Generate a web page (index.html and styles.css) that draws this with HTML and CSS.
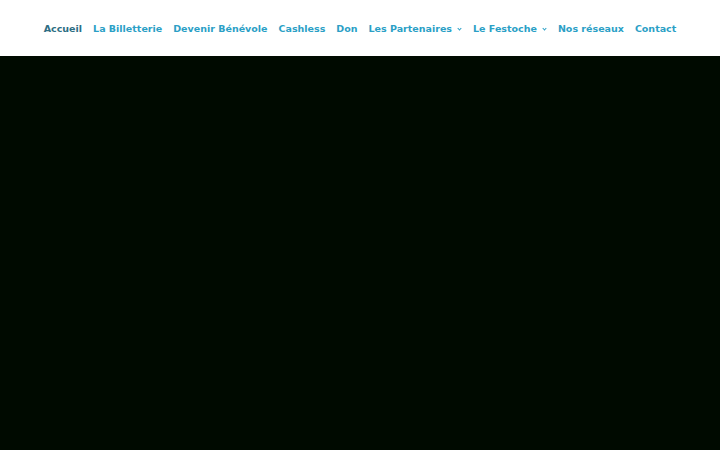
FILE: index.html
```html
<!DOCTYPE html>
<html lang="fr">
<head>
  <meta charset="UTF-8" />
  <meta name="viewport" content="width=device-width, initial-scale=1.0" />
  <title>Festoche</title>
  <link rel="stylesheet" href="styles.css">
</head>
<body>
  <header class="site-header">
    <nav class="main-nav">
      <a class="nav-link current" href="#">Accueil</a>
      <a class="nav-link" href="#">La Billetterie</a>
      <a class="nav-link" href="#">Devenir Bénévole</a>
      <a class="nav-link" href="#">Cashless</a>
      <a class="nav-link" href="#">Don</a>
      <a class="nav-link has-sub" href="#">Les Partenaires</a>
      <a class="nav-link has-sub" href="#">Le Festoche</a>
      <a class="nav-link" href="#">Nos réseaux</a>
      <a class="nav-link" href="#">Contact</a>
    </nav>
  </header>
  <section class="hero"></section>
</body>
</html>
```

FILE: styles.css
```css
body {
  margin: 0;
  font-family: "DejaVu Sans", sans-serif;
  background-color: #000a00;
}
.site-header {
  background: #fff;
  height: 56px;
  display: flex;
  align-items: center;
  justify-content: center;
  box-shadow: 0 1px 0 rgba(0, 0, 0, 0.1);
}
.main-nav {
  display: flex;
  gap: 11px;
  align-items: center;
}
.nav-link {
  color: #2b9fc6;
  font-weight: bold;
  font-size: 9.5px;
  text-decoration: none;
}
.nav-link.current {
  color: #2e6e84;
}
.has-sub::after {
  content: "";
  display: inline-block;
  width: 2px;
  height: 2px;
  border-right: 1px solid #2b9fc6;
  border-bottom: 1px solid #2b9fc6;
  transform: rotate(45deg);
  margin-left: 6px;
  margin-right: 1px;
  vertical-align: 2px;
}
.hero {
  height: 394px;
  background-color: #000a00;
}
```
